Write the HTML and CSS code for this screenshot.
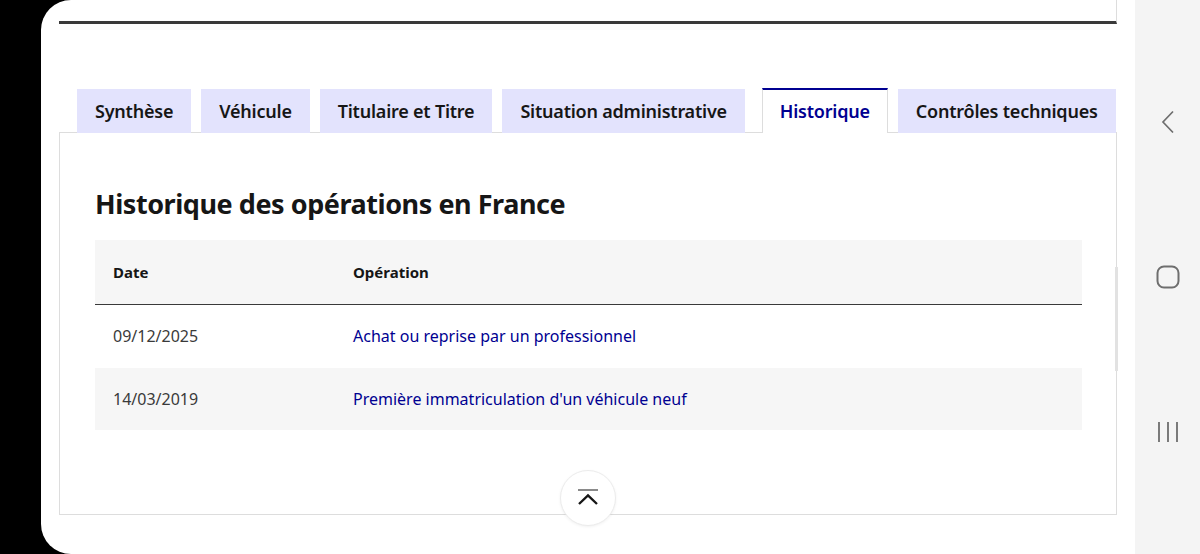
FILE: index.html
```html
<!DOCTYPE html>
<html lang="fr">
<head>
<meta charset="utf-8">
<title>Historique</title>
<link rel="stylesheet" href="styles.css">
</head>
<body>
<div class="device">
  <div class="bezel"></div>
  <div class="screen">
    <div class="topbox"></div>
    <div class="tabs">
      <div class="tab">Synthèse</div>
      <div class="tab">Véhicule</div>
      <div class="tab">Titulaire et Titre</div>
      <div class="tab">Situation administrative</div>
      <div class="tab active">Historique</div>
      <div class="tab">Contrôles techniques</div>
    </div>
    <div class="panel">
      <h2 class="title">Historique des opérations en France</h2>
      <table class="ops">
        <thead>
          <tr><th class="c-date">Date</th><th>Opération</th></tr>
        </thead>
        <tbody>
          <tr><td class="c-date">09/12/2025</td><td class="op">Achat ou reprise par un professionnel</td></tr>
          <tr class="alt"><td class="c-date">14/03/2019</td><td class="op">Première immatriculation d'un véhicule neuf</td></tr>
        </tbody>
      </table>
      <button class="top-btn" aria-label="Haut de page">
        <svg width="26" height="20" viewBox="0 0 26 20">
          <line x1="3" y1="2" x2="23" y2="2" stroke="#8a8a8a" stroke-width="2"/>
          <path d="M4 16 L13 7.5 L22 16" fill="none" stroke="#161616" stroke-width="2.4"/>
        </svg>
      </button>
    </div>
    <div class="scrollbar"></div>
  </div>
  <nav class="navbar">
    <div class="nav-item">
      <svg width="14" height="24" viewBox="0 0 14 24"><path d="M12 1.5 L2 12 L12 22.5" fill="none" stroke="#6e6e6e" stroke-width="1.7"/></svg>
    </div>
    <div class="nav-item">
      <svg width="24" height="24" viewBox="0 0 24 24"><rect x="1.5" y="1.5" width="21" height="21" rx="6.5" fill="none" stroke="#6e6e6e" stroke-width="2"/></svg>
    </div>
    <div class="nav-item">
      <svg width="22" height="22" viewBox="0 0 22 22"><path d="M2 1 V21 M11 1 V21 M20 1 V21" fill="none" stroke="#6e6e6e" stroke-width="1.8"/></svg>
    </div>
  </nav>
</div>
</body>
</html>
```

FILE: styles.css
```css
* { box-sizing: border-box; }

html, body {
  margin: 0;
  padding: 0;
  height: 554px;
  overflow: hidden;
  background: #000;
}

body {
  font-family: "Noto Sans", "Open Sans", sans-serif;
  color: #161616;
}

.device {
  display: flex;
  width: 1200px;
  height: 554px;
}

.bezel {
  width: 41px;
  background: #000;
  flex: none;
}

.screen {
  position: relative;
  width: 1094px;
  flex: none;
  height: 554px;
  background: #fff;
  border-radius: 30px 0 0 30px;
  padding: 0 18px;
}

.topbox {
  height: 24px;
  border-bottom: 3px solid #3a3a3a;
  border-right: 1px solid #dddddd;
}

.tabs {
  display: flex;
  align-items: flex-end;
  gap: 10px;
  margin-top: 64px;
  padding-left: 18px;
  height: 45px;
  position: relative;
  z-index: 1;
}

.tab {
  height: 44px;
  display: flex;
  align-items: center;
  padding: 0 18px;
  background: #e3e3fd;
  font-size: 18px;
  font-weight: 600;
  color: #161616;
  white-space: nowrap;
  letter-spacing: -0.22px;
}

.tab.active {
  height: 45px;
  margin-left: 7px;
  background: #fff;
  color: #000091;
  border-top: 2px solid #000091;
  border-left: 1px solid #dddddd;
  border-right: 1px solid #dddddd;
  padding: 0 17px 1px;
}

.panel {
  position: relative;
  margin-top: -1px;
  height: 383px;
  border: 1px solid #dddddd;
  padding: 53px 34px 0 35px;
}

.title {
  margin: 0;
  font-size: 27px;
  line-height: 36px;
  font-weight: 700;
  letter-spacing: -0.45px;
  color: #161616;
}

.ops {
  margin-top: 18px;
  width: 987px;
  border-collapse: collapse;
  font-size: 16px;
}

.ops th {
  height: 64px;
  text-align: left;
  font-size: 15px;
  font-weight: 700;
  background: #f6f6f6;
  border-bottom: 1px solid #3a3a3a;
  padding: 0 18px;
}

.ops td {
  height: 64px;
  padding: 0 18px;
  color: #3a3a3a;
}

.ops .c-date {
  width: 240px;
}

.ops td.op {
  color: #000091;
}

.ops tr.alt td {
  background: #f6f6f6;
  height: 62px;
}

.top-btn {
  position: absolute;
  left: 50%;
  bottom: -12px;
  width: 56px;
  height: 56px;
  margin-left: -28px;
  border-radius: 50%;
  background: #fff;
  border: 1px solid #ececec;
  box-shadow: 0 1px 3px rgba(0,0,0,0.06);
  display: flex;
  align-items: center;
  justify-content: center;
  padding: 0;
}

.scrollbar {
  position: absolute;
  right: 17px;
  top: 267px;
  width: 3px;
  height: 104px;
  background: #e2e2e2;
}

.navbar {
  flex: 1;
  background: #f4f4f4;
  display: flex;
  flex-direction: column;
  padding-top: 44px;
}

.nav-item {
  height: 155px;
  display: flex;
  align-items: center;
  justify-content: center;
}
```
